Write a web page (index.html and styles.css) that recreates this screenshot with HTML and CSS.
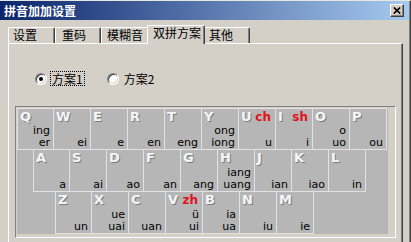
FILE: index.html
```html
<!DOCTYPE html>
<html lang="zh">
<head>
    <meta charset="UTF-8">
    <title>拼音加加设置</title>
    <link rel="stylesheet" href="styles.css">
</head>
<body>
    <div class="window">
        <div class="titlebar">
            <span class="title">拼音加加设置</span>
            <span class="close">
                <svg width="8" height="7" viewBox="0 0 8 7"><path d="M0.8 0.5 L7.2 6.5 M7.2 0.5 L0.8 6.5" stroke="#000" stroke-width="1.7"/></svg>
            </span>
        </div>

        <div class="content">
            <div class="tabs">
                <div class="tab tab-1">设置</div>
                <div class="tab tab-2">重码</div>
                <div class="tab tab-3">模糊音</div>
                <div class="tab tab-active">双拼方案</div>
                <div class="tab tab-5">其他</div>
            </div>

            <div class="panel">
                <div class="schemes">
                    <div class="radio-option">
                        <span class="radio checked"></span>
                        <span class="radio-label focused">方案1</span>
                    </div>
                    <div class="radio-option second">
                        <span class="radio"></span>
                        <span class="radio-label">方案2</span>
                    </div>
                </div>

                <div class="kbd-frame">
                    <div class="keyboard">
                        <div class="kb-row row-top">
                            <div class="key first"><div class="key-head"><span class="letter">Q</span></div><div class="finals"><span>ing</span><span>er</span></div></div>
                            <div class="key"><div class="key-head"><span class="letter">W</span></div><div class="finals"><span>ei</span></div></div>
                            <div class="key"><div class="key-head"><span class="letter">E</span></div><div class="finals"><span>e</span></div></div>
                            <div class="key"><div class="key-head"><span class="letter">R</span></div><div class="finals"><span>en</span></div></div>
                            <div class="key"><div class="key-head"><span class="letter">T</span></div><div class="finals"><span>eng</span></div></div>
                            <div class="key"><div class="key-head"><span class="letter">Y</span></div><div class="finals"><span>ong</span><span>iong</span></div></div>
                            <div class="key"><div class="key-head"><span class="letter">U</span><span class="shengmu">ch</span></div><div class="finals"><span>u</span></div></div>
                            <div class="key"><div class="key-head"><span class="letter">I</span><span class="shengmu">sh</span></div><div class="finals"><span>i</span></div></div>
                            <div class="key"><div class="key-head"><span class="letter">O</span></div><div class="finals"><span>o</span><span>uo</span></div></div>
                            <div class="key"><div class="key-head"><span class="letter">P</span></div><div class="finals"><span>ou</span></div></div>
                        </div>
                        <div class="kb-row">
                            <div class="spacer spacer-home"></div>
                            <div class="key"><div class="key-head"><span class="letter">A</span></div><div class="finals"><span>a</span></div></div>
                            <div class="key"><div class="key-head"><span class="letter">S</span></div><div class="finals"><span>ai</span></div></div>
                            <div class="key"><div class="key-head"><span class="letter">D</span></div><div class="finals"><span>ao</span></div></div>
                            <div class="key"><div class="key-head"><span class="letter">F</span></div><div class="finals"><span>an</span></div></div>
                            <div class="key"><div class="key-head"><span class="letter">G</span></div><div class="finals"><span>ang</span></div></div>
                            <div class="key"><div class="key-head"><span class="letter">H</span></div><div class="finals"><span>iang</span><span>uang</span></div></div>
                            <div class="key"><div class="key-head"><span class="letter">J</span></div><div class="finals"><span>ian</span></div></div>
                            <div class="key"><div class="key-head"><span class="letter">K</span></div><div class="finals"><span>iao</span></div></div>
                            <div class="key"><div class="key-head"><span class="letter">L</span></div><div class="finals"><span>in</span></div></div>
                        </div>
                        <div class="kb-row">
                            <div class="spacer spacer-bottom"></div>
                            <div class="key"><div class="key-head"><span class="letter">Z</span></div><div class="finals"><span>un</span></div></div>
                            <div class="key"><div class="key-head"><span class="letter">X</span></div><div class="finals"><span>ue</span><span>uai</span></div></div>
                            <div class="key"><div class="key-head"><span class="letter">C</span></div><div class="finals"><span>uan</span></div></div>
                            <div class="key"><div class="key-head"><span class="letter">V</span><span class="shengmu">zh</span></div><div class="finals"><span>ü</span><span>ui</span></div></div>
                            <div class="key"><div class="key-head"><span class="letter">B</span></div><div class="finals"><span>ia</span><span>ua</span></div></div>
                            <div class="key"><div class="key-head"><span class="letter">N</span></div><div class="finals"><span>iu</span></div></div>
                            <div class="key"><div class="key-head"><span class="letter">M</span></div><div class="finals"><span>ie</span></div></div>
                        </div>
                    </div>
                </div>
            </div>
        </div>
    </div>
</body>
</html>
```

FILE: styles.css
```css
body {
    margin: 0;
    background-color: #d4d0c8;
    font-family: "Noto Sans CJK SC", "DejaVu Sans", sans-serif;
    font-size: 12px;
    color: #000;
    overflow: hidden;
}

.window {
    width: 411px;
    height: 242px;
    box-sizing: border-box;
    border-top: 1px solid #e8e6e0;
    border-right: 1px solid #404040;
    box-shadow: inset -1px 0 #808080;
    overflow: hidden;
}

/* title bar */
.titlebar {
    height: 19px;
    display: flex;
    align-items: center;
    justify-content: space-between;
    padding: 0 5px 0 4px;
    margin-right: 1px;
    background: linear-gradient(to right, #0a246a, #a6caf0);
}

.title {
    color: #fff;
    font-weight: bold;
    font-size: 12px;
    line-height: 19px;
}

.close {
    width: 14px;
    height: 13px;
    box-sizing: border-box;
    display: flex;
    align-items: center;
    justify-content: center;
    background-color: #d4d0c8;
    border: 1px solid;
    border-color: #fff #404040 #404040 #fff;
    box-shadow: inset -1px -1px #808080;
}

/* tabs */
.content {
    padding: 5px 7px 0 8px;
}

.tabs {
    display: flex;
    align-items: flex-end;
    height: 18px;
}

.tab {
    height: 16px;
    box-sizing: border-box;
    padding-left: 5px;
    line-height: 14px;
    border-top: 1px solid #fff;
    border-left: 1px solid #fff;
    border-right: 1px solid #404040;
    box-shadow: inset -1px 0 #808080;
    border-radius: 2px 2px 0 0;
    background-color: #d4d0c8;
}

.tab-1 { width: 47px; padding-left: 4px; }
.tab-2 { width: 46px; padding-left: 6px; }
.tab-3 { width: 48px; padding-left: 5px; }
.tab-5 { width: 47px; padding-left: 5px; }

.tab-active {
    position: relative;
    z-index: 1;
    width: 58px;
    height: 19px;
    margin: 0 -2px -1px -2px;
    padding-left: 5px;
    line-height: 14px;
}

/* panel */
.panel {
    height: 220px;
    border-top: 1px solid #fff;
    border-left: 1px solid #fff;
    border-right: 1px solid #404040;
    box-shadow: inset -1px 0 #808080;
}

.schemes {
    display: flex;
    align-items: center;
    height: 15px;
    padding: 27px 0 0 26px;
}

.radio-option {
    display: flex;
    align-items: center;
}

.radio-option.second {
    margin-left: 22px;
}

.radio {
    position: relative;
    width: 12px;
    height: 12px;
    box-sizing: border-box;
    border-radius: 50%;
    background-color: #fff;
    border: 1px solid;
    border-color: #808080 #fff #fff #808080;
    box-shadow: inset 1px 1px #404040, inset -1px -1px #d4d0c8;
}

.radio.checked::after {
    content: "";
    position: absolute;
    left: 3px;
    top: 3px;
    width: 4px;
    height: 4px;
    border-radius: 50%;
    background-color: #000;
}

.radio-label {
    margin-left: 3px;
    padding: 0 1px;
    line-height: 13px;
    border: 1px dotted transparent;
}

.radio-label.focused {
    border-color: #000;
}

/* keyboard picture */
.kbd-frame {
    margin: 20px 0 0 6px;
    padding: 1px 7px 3px 1px;
    box-sizing: border-box;
    width: 381px;
    border: 1px solid;
    border-color: #808080 #fff #fff #808080;
}

.keyboard {
    width: 371px;
    height: 126px;
    background-color: #b6b6b6;
}

.kb-row {
    display: flex;
    height: 42px;
}

.spacer-home { width: 16px; }
.spacer-bottom { width: 38px; }

.key {
    width: 37px;
    height: 42px;
    box-sizing: border-box;
    display: flex;
    flex-direction: column;
    padding: 1px 2px 0 2px;
    border-right: 1px solid #e2e2e2;
    border-bottom: 1px solid #e2e2e2;
}

.row-top .key {
    border-top: 1px solid #e2e2e2;
}

.key.first,
.spacer + .key {
    border-left: 1px solid #e2e2e2;
}

.key-head {
    display: flex;
    justify-content: space-between;
    align-items: baseline;
    height: 14px;
}

.letter {
    font-family: "DejaVu Sans", sans-serif;
    font-weight: bold;
    font-size: 13px;
    line-height: 14px;
    color: #f6f6f6;
    text-shadow: 1px 1px 0 #7c7c7c;
}

.shengmu {
    font-family: "DejaVu Sans", sans-serif;
    font-weight: bold;
    font-size: 12px;
    line-height: 14px;
    padding-right: 2px;
    color: #e0141c;
}

.finals {
    margin-top: auto;
    display: flex;
    flex-direction: column;
    align-items: flex-end;
    font-family: "DejaVu Sans", sans-serif;
    font-size: 11px;
    line-height: 12px;
    padding-right: 1px;
}
```
